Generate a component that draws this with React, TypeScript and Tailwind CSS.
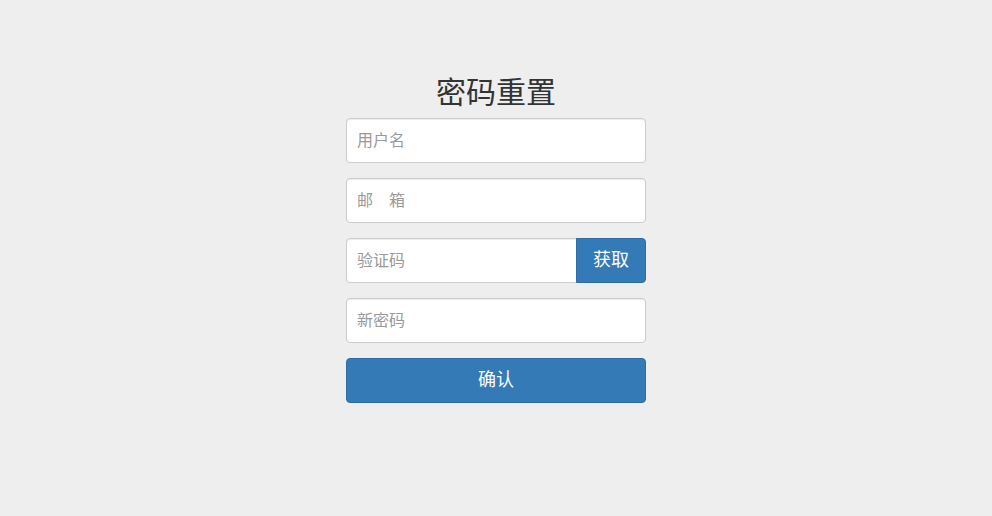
import { useState } from "react";

export default function App() {
    const [form, setForm] = useState({ username: "", email: "", code: "", password: "" });

    const update = (key: keyof typeof form) => (e: React.ChangeEvent<HTMLInputElement>) =>
        setForm({ ...form, [key]: e.target.value });

    const inputClass =
        "block w-full h-[45px] px-[10px] bg-white border border-[#ccc] rounded-[4px] text-[16px] text-[#555] placeholder:text-[#999] outline-none shadow-[inset_0_1px_1px_rgba(0,0,0,0.075)]";

    return (
        <div
            className="min-h-screen bg-[#eee] flex flex-col items-center"
            style={{ fontFamily: '"Helvetica Neue", "Liberation Sans", "Noto Sans CJK SC", sans-serif' }}
        >
            <h1 className="mt-[76px] mb-[9px] text-[30px] leading-[33px] text-[#333] font-normal">密码重置</h1>

            <form className="w-[300px] flex flex-col gap-[15px]" onSubmit={(e) => e.preventDefault()}>
                <input className={inputClass} placeholder="用户名" value={form.username} onChange={update("username")} />
                <input className={inputClass} placeholder="邮　箱" value={form.email} onChange={update("email")} />

                <div className="flex h-[45px]">
                    <input
                        className="flex-1 min-w-0 h-full px-[10px] bg-white border border-[#ccc] rounded-l-[4px] text-[16px] text-[#555] placeholder:text-[#999] outline-none shadow-[inset_0_1px_1px_rgba(0,0,0,0.075)]"
                        placeholder="验证码"
                        value={form.code}
                        onChange={update("code")}
                    />
                    <button
                        type="button"
                        className="w-[70px] h-full -ml-px bg-[#337ab7] border border-[#2e6da4] rounded-r-[4px] text-white text-[18px]"
                    >
                        获取
                    </button>
                </div>

                <input
                    type="password"
                    className={inputClass}
                    placeholder="新密码"
                    value={form.password}
                    onChange={update("password")}
                />

                <button
                    type="submit"
                    className="w-full h-[45px] bg-[#337ab7] border border-[#2e6da4] rounded-[4px] text-white text-[18px]"
                >
                    确认
                </button>
            </form>
        </div>
    );
}
